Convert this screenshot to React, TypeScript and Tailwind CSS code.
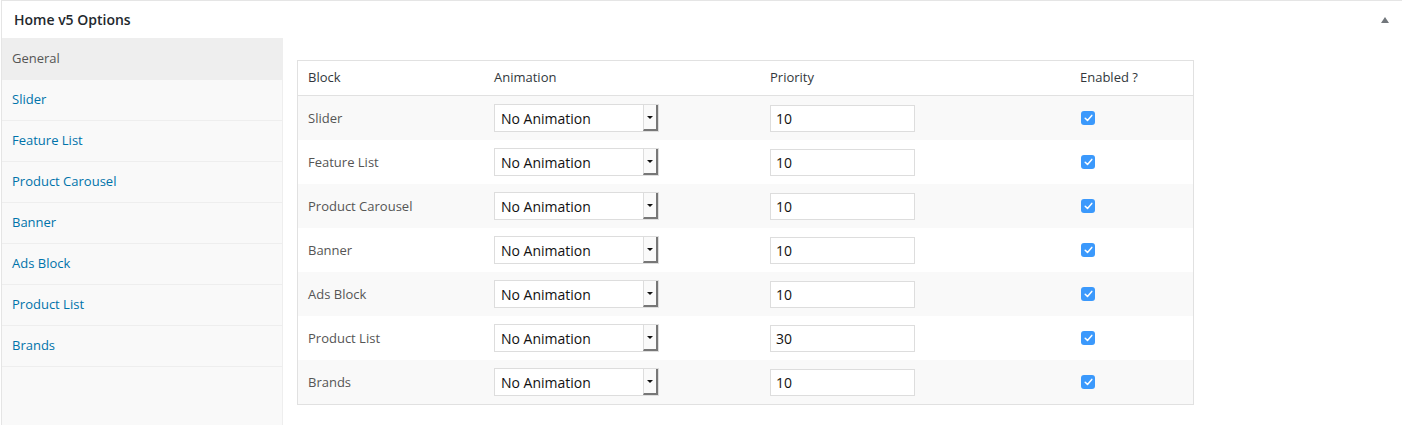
const MENU = [
  "General",
  "Slider",
  "Feature List",
  "Product Carousel",
  "Banner",
  "Ads Block",
  "Product List",
  "Brands",
];

const ROWS = [
  { block: "Slider", priority: "10" },
  { block: "Feature List", priority: "10" },
  { block: "Product Carousel", priority: "10" },
  { block: "Banner", priority: "10" },
  { block: "Ads Block", priority: "10" },
  { block: "Product List", priority: "30" },
  { block: "Brands", priority: "10" },
];

const GRID = "grid grid-cols-[186px_276px_310px_1fr] items-center";

export default function App() {
  return (
    <div
      className="h-[425px] w-[1402px] overflow-hidden bg-white pl-px text-[#444]"
      style={{ fontFamily: '"Open Sans", "Noto Sans", sans-serif' }}
    >
      <div className="flex h-full flex-col border-t border-l border-[#e5e5e5]">
        <div className="flex h-[37px] shrink-0 items-center justify-between pr-[13px] pl-[12px]">
          <h2 className="text-[14px] font-semibold text-[#23282d]">
            Home v5 Options
          </h2>
          <span className="block h-0 w-0 border-x-[4px] border-b-[6px] border-x-transparent border-b-[#72777c]" />
        </div>

        <div className="flex min-h-0 flex-1">
          <Sidebar />
          <div className="flex-1 pt-[22px] pl-[14px]">
            <OptionsTable />
          </div>
        </div>
      </div>
    </div>
  );
}

function Sidebar() {
  return (
    <ul className="w-[281px] shrink-0 border-r border-[#eee] bg-[#f9f9f9]">
      {MENU.map((item, i) => (
        <li
          key={item}
          className={
            i === 0
              ? "flex h-[42px] items-center bg-[#eee] pl-[10px] text-[13px] text-[#555]"
              : "flex h-[41px] items-center border-b border-[#eee] pl-[10px] text-[13px] text-[#0073aa]"
          }
        >
          {item}
        </li>
      ))}
    </ul>
  );
}

function OptionsTable() {
  return (
    <div className="w-[897px] border border-[#e1e1e1] text-[13px]">
      <div className={`${GRID} h-[35px] border-b border-[#e1e1e1] text-[#32373c]`}>
        <div className="pl-[10px]">Block</div>
        <div className="pl-[10px]">Animation</div>
        <div className="pl-[10px]">Priority</div>
        <div className="pl-[10px]">Enabled ?</div>
      </div>
      {ROWS.map((row, i) => (
        <div
          key={row.block}
          className={`${GRID} h-[44px] ${i % 2 === 0 ? "bg-[#f9f9f9]" : "bg-white"}`}
        >
          <div className="pt-px pl-[10px] text-[#555]">{row.block}</div>
          <div className="pl-[10px]">
            <Select />
          </div>
          <div className="pl-[10px]">
            <input
              readOnly
              value={row.priority}
              className="h-[27px] w-[145px] border border-[#ddd] bg-white px-[5px] text-[14px] text-[#111] outline-none"
            />
          </div>
          <div className="pl-[11px]">
            <Checkbox />
          </div>
        </div>
      ))}
    </div>
  );
}

function Select() {
  return (
    <div className="flex h-[28px] w-[165px] border border-[#ddd] bg-white">
      <span className="flex flex-1 items-center pl-[6px] text-[14px] text-[#111]">
        No Animation
      </span>
      <span className="flex w-[15px] items-center justify-center border-r-2 border-b-2 border-l border-r-[#777] border-b-[#777] border-l-[#ddd] bg-[#fafafa]">
        <span className="block h-0 w-0 border-x-[3px] border-t-[3px] border-x-transparent border-t-[#111]" />
      </span>
    </div>
  );
}

function Checkbox() {
  return (
    <span className="flex h-[14px] w-[14px] items-center justify-center rounded-[3px] bg-[#3b99fc]">
      <svg width="9" height="8" viewBox="0 0 9 8" fill="none">
        <path
          d="M1.2 4.2 L3.5 6.4 L7.8 1.4"
          stroke="white"
          strokeWidth="1.5"
          strokeLinecap="round"
          strokeLinejoin="round"
        />
      </svg>
    </span>
  );
}
